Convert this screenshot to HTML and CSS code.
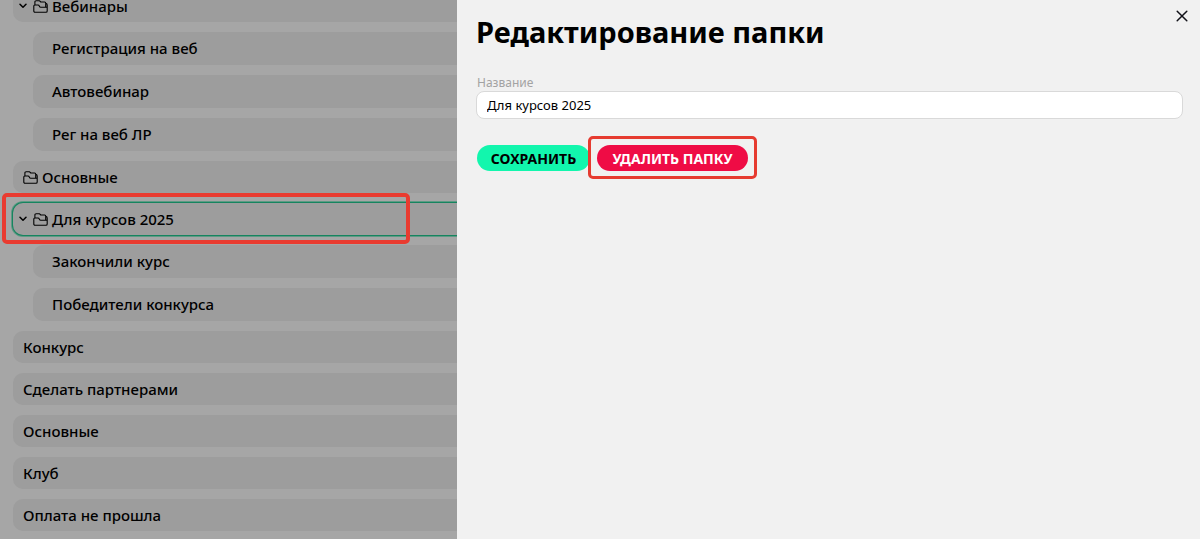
FILE: index.html
```html
<!DOCTYPE html>
<html lang="ru">
<head>
<meta charset="utf-8">
<meta name="viewport" content="width=device-width, initial-scale=1">
<title>Редактирование папки</title>
<link rel="stylesheet" href="styles.css">
</head>
<body>
<svg class="sprite" aria-hidden="true">
  <symbol id="folder" viewBox="0 0 15 13">
    <path d="M1.9 5V2Q1.9 .8 3.1 .8H6.6L7.8 2H11.6Q12.7 2 12.7 3.1V6.8M.8 6Q.8 5 1.8 5H5Q5.9 5 6.2 5.8L6.5 6.5Q6.8 7.2 7.7 7.2H14.2V11Q14.2 12.3 13 12.3H2Q.8 12.3 .8 11ZM12.9 3.4Q14.2 3.6 14.2 5V7.2"/>
  </symbol>
  <symbol id="chevron" viewBox="0 0 8 6"><path d="M1 1.2L4 4.2L7 1.2"/></symbol>
</svg>
<div class="page">
  <nav class="folders">
    <ul class="list">
      <li class="group">
        <div class="row row-open">
          <svg class="chevron"><use href="#chevron"/></svg>
          <svg class="folder"><use href="#folder"/></svg>
          <span>Вебинары</span>
        </div>
        <ul class="list list-nested">
          <li class="row">Регистрация на веб</li>
          <li class="row">Автовебинар</li>
          <li class="row">Рег на веб ЛР</li>
        </ul>
      </li>
      <li class="row">
        <svg class="folder"><use href="#folder"/></svg>
        <span>Основные</span>
      </li>
      <li class="group">
        <div class="row row-open row-selected">
          <svg class="chevron"><use href="#chevron"/></svg>
          <svg class="folder"><use href="#folder"/></svg>
          <span>Для курсов 2025</span>
        </div>
        <ul class="list list-nested">
          <li class="row">Закончили курс</li>
          <li class="row">Победители конкурса</li>
        </ul>
      </li>
      <li class="row">Конкурс</li>
      <li class="row">Сделать партнерами</li>
      <li class="row">Основные</li>
      <li class="row">Клуб</li>
      <li class="row">Оплата не прошла</li>
    </ul>
  </nav>
  <main class="drawer">
    <button class="close" type="button" aria-label="Закрыть">
      <svg viewBox="0 0 12 12"><path d="M1.2 1.2L10.8 10.8M10.8 1.2L1.2 10.8"/></svg>
    </button>
    <h1 class="title">Редактирование папки</h1>
    <form class="form">
      <label class="label" for="name">Название</label>
      <input class="input" id="name" type="text" value="Для курсов 2025">
      <div class="actions">
        <button class="button button-save" type="submit">СОХРАНИТЬ</button>
        <span class="marked"><button class="button button-delete" type="button">УДАЛИТЬ ПАПКУ</button></span>
      </div>
    </form>
  </main>
</div>
</body>
</html>
```
FILE: styles.css
```css
* { box-sizing: border-box; }
body {
  margin: 0;
  font-family: "Noto Sans", sans-serif;
  color: #000;
  background: #f1f1f1;
}
.sprite { position: absolute; width: 0; height: 0; }
.page {
  display: grid;
  grid-template-columns: 457fr 743fr;
  height: 100vh;
  overflow: hidden;
}
.folders {
  background: #a6a6a6;
  padding-left: 13px;
  overflow: hidden;
}
.folders > .list { margin-top: -10px; }
.list {
  display: flex;
  flex-direction: column;
  gap: 10px;
  list-style: none;
  margin: 0;
  padding: 0;
}
.list-nested { margin: 10px 0 0 20px; }
.row {
  display: flex;
  align-items: center;
  gap: 4px;
  height: 32px;
  padding: 0 10px;
  border-radius: 10px 0 0 10px;
  background: #9d9d9d;
  color: #000;
  font-size: 15px;
  line-height: 18px;
  font-weight: 550;
  white-space: nowrap;
}
.list-nested .row { height: 33px; padding: 0 19px 2px; }
.row-open { padding-left: 6px; }
.row-selected {
  position: relative;
  box-shadow: 0 0 0 1px #16845f, 0 0 0 2px #5d9a84;
}
.row-selected::after {
  content: "";
  position: absolute;
  inset: -10px 47px -9px -11px;
  border: 4px solid #e93b30;
  border-radius: 5px;
}
.chevron, .folder, .close svg {
  flex: none;
  fill: none;
  stroke: currentColor;
  stroke-linecap: round;
  stroke-linejoin: round;
}
.chevron { width: 8px; height: 6px; margin-right: 2px; stroke-width: 1.5; }
.folder { width: 15px; height: 13px; stroke-width: 1.1; }
.drawer {
  position: relative;
  background: #f1f1f1;
  padding: 12px 17px 20px 19px;
}
.close {
  position: absolute;
  top: 10px;
  right: 12px;
  display: flex;
  padding: 0;
  border: 0;
  background: none;
  color: #111118;
}
.close svg { width: 12px; height: 12px; stroke-width: 1.5; }
.title {
  margin: 0;
  font-size: 29px;
  line-height: 40px;
  font-weight: 700;
}
.form { margin-top: 22px; }
.label {
  display: block;
  padding-left: 1px;
  font-size: 12px;
  line-height: 17px;
  color: #a3a3a3;
}
.input {
  display: block;
  width: 100%;
  height: 28px;
  padding: 0 10px;
  border: 1px solid #d9d9d9;
  border-radius: 8px;
  background: #fff;
  font: 13px "Noto Sans", sans-serif;
  color: #000;
}
.actions { display: flex; gap: 7px; margin-top: 26px; padding-left: 1px; }
.button {
  display: block;
  height: 26px;
  padding: 0 13px;
  border: 0;
  border-radius: 14px;
  font: 700 14px "Noto Sans", sans-serif;
}
.button-save { min-width: 113px; background: #12f6ad; color: #000; }
.button-delete { min-width: 151px; background: #ef0c45; color: #fff; }
.marked { position: relative; }
.marked::after {
  content: "";
  position: absolute;
  inset: -9px -9px -8px -9px;
  border: 3px solid #e63b30;
  border-radius: 5px;
  pointer-events: none;
}
```
